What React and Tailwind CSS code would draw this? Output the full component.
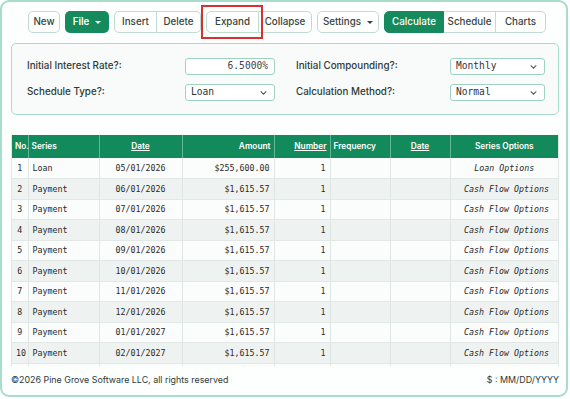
import React from "react";

const rows = [
  { no: 1, series: "Loan", date: "05/01/2026", amount: "$255,600.00", opt: "Loan Options" },
  { no: 2, series: "Payment", date: "06/01/2026", amount: "$1,615.57", opt: "Cash Flow Options" },
  { no: 3, series: "Payment", date: "07/01/2026", amount: "$1,615.57", opt: "Cash Flow Options" },
  { no: 4, series: "Payment", date: "08/01/2026", amount: "$1,615.57", opt: "Cash Flow Options" },
  { no: 5, series: "Payment", date: "09/01/2026", amount: "$1,615.57", opt: "Cash Flow Options" },
  { no: 6, series: "Payment", date: "10/01/2026", amount: "$1,615.57", opt: "Cash Flow Options" },
  { no: 7, series: "Payment", date: "11/01/2026", amount: "$1,615.57", opt: "Cash Flow Options" },
  { no: 8, series: "Payment", date: "12/01/2026", amount: "$1,615.57", opt: "Cash Flow Options" },
  { no: 9, series: "Payment", date: "01/01/2027", amount: "$1,615.57", opt: "Cash Flow Options" },
  { no: 10, series: "Payment", date: "02/01/2027", amount: "$1,615.57", opt: "Cash Flow Options" },
];

const Caret = () => (
  <span className="ml-[6px] inline-block w-0 h-0 border-l-[3px] border-r-[3px] border-t-[3px] border-l-transparent border-r-transparent border-t-current" />
);

const Chevron = () => (
  <svg width="9" height="9" viewBox="0 0 16 16" fill="none" stroke="#555" strokeWidth="1.8">
    <path d="M3 6l5 5 5-5" />
  </svg>
);

const btn =
  "h-[22px] flex items-center justify-center text-[9.8px] font-medium border border-[#bfdcd1] bg-white text-[#33453e]";

const Select = ({ value }) => (
  <div className="h-[17px] flex items-center justify-between pl-[5px] pr-[6px] border border-[#9fd3c1] rounded-[3px] bg-white text-[9.6px] text-[#333] font-['DejaVu_Sans_Mono',monospace]">
    <span>{value}</span>
    <Chevron />
  </div>
);

const App = () => {
  const th = "border-r border-[#5fb893] px-[3px] font-semibold text-white text-[8.3px] whitespace-nowrap";
  const td = "border-r border-[#dfe6e3] px-[4px] whitespace-nowrap";

  return (
    <div className="w-[570px] h-[399px] overflow-hidden bg-white font-['Inter',sans-serif]">
      <div className="relative w-[568px] h-[397px] border-2 border-[#a9dccb] rounded-[9px] bg-[#fdfefe] flex flex-col">
        {/* toolbar */}
        <div className="flex items-center gap-[5px] pl-[26px] pt-[9px]">
          <button className={`${btn} w-[32px] rounded-[5px]`}>New</button>
          <button className="w-[44px] h-[22px] flex items-center justify-center text-[9.8px] font-semibold rounded-[5px] bg-[#158a5c] text-white">
            File
            <Caret />
          </button>
          <div className="flex">
            <button className={`${btn} w-[43px] rounded-l-[5px]`}>Insert</button>
            <button className={`${btn} w-[44px] border-l-0 rounded-r-[5px]`}>Delete</button>
          </div>
          <div className="flex">
            <button className={`${btn} w-[53px] rounded-l-[5px]`}>Expand</button>
            <button className={`${btn} w-[53px] border-l-0 rounded-r-[5px]`}>Collapse</button>
          </div>
          <button className={`${btn} w-[62px] rounded-[5px]`}>
            Settings
            <Caret />
          </button>
          <div className="flex">
            <button className="w-[60px] h-[22px] flex items-center justify-center text-[9.8px] font-medium rounded-l-[5px] bg-[#158a5c] text-white border border-[#158a5c]">
              Calculate
            </button>
            <button className={`${btn} w-[52px] border-l-0`}>Schedule</button>
            <button className={`${btn} w-[50px] border-l-0 rounded-r-[5px]`}>Charts</button>
          </div>
        </div>

        {/* highlight */}
        <div className="absolute left-[199px] top-[3px] w-[62px] h-[34px] border-2 border-[#d63232]" />

        {/* settings panel */}
        <div className="mt-[10px] ml-[9px] w-[548px] h-[72px] border border-[#a9dccb] rounded-[5px] bg-[#f8fbfa] px-[15px] pt-[14px] text-[9.8px] font-medium text-[#2f3a36]">
          <div className="grid grid-cols-[158px_90px_21px_154px_95px] gap-y-[9px] items-center">
            <span>Initial Interest Rate?:</span>
            <div className="h-[17px] flex items-center justify-end pr-[6px] border border-[#9fd3c1] rounded-[3px] bg-white text-[9.6px] text-[#444] font-['DejaVu_Sans_Mono',monospace]">
              6.5000%
            </div>
            <span />
            <span>Initial Compounding?:</span>
            <Select value="Monthly" />
            <span>Schedule Type?:</span>
            <Select value="Loan" />
            <span />
            <span>Calculation Method?:</span>
            <Select value="Normal" />
          </div>
        </div>

        {/* table */}
        <div className="mt-[20px] ml-[9px] w-[548px] h-[231px] overflow-hidden border-x border-[#dfe6e3]">
          <table className="w-full border-collapse table-fixed text-[8.3px] text-[#2a2a2a] font-['DejaVu_Sans_Mono',monospace]">
            <colgroup>
              <col className="w-[16px]" />
              <col className="w-[71px]" />
              <col className="w-[83px]" />
              <col className="w-[92px]" />
              <col className="w-[56px]" />
              <col className="w-[60px]" />
              <col className="w-[60px]" />
              <col />
            </colgroup>
            <thead>
              <tr className="h-[23px] bg-[#128a5c] font-['Inter',sans-serif]">
                <th className={`${th} px-[1px] text-left`}>No.</th>
                <th className={`${th} text-left`}>Series</th>
                <th className={`${th} underline`}>Date</th>
                <th className={`${th} text-right`}>Amount</th>
                <th className={`${th} text-right underline`}>Number</th>
                <th className={`${th} text-left`}>Frequency</th>
                <th className={`${th} underline`}>Date</th>
                <th className="px-[3px] font-semibold text-white text-[8.3px]">Series Options</th>
              </tr>
            </thead>
            <tbody>
              {rows.map((r, i) => (
                <tr
                  key={r.no}
                  className={`h-[20.5px] border-b border-[#e2e8e5] ${i % 2 ? "bg-[#eef3f1]" : "bg-[#fbfcfc]"}`}
                >
                  <td className={`${td} px-[1px] text-center`}>{r.no}</td>
                  <td className={td}>{r.series}</td>
                  <td className={`${td} text-center`}>{r.date}</td>
                  <td className={`${td} text-right`}>{r.amount}</td>
                  <td className={`${td} text-right`}>1</td>
                  <td className={td}></td>
                  <td className={td}></td>
                  <td className={`px-[4px] italic whitespace-nowrap ${i === 0 ? "text-center" : "text-right pr-[9px]"}`}>
                    {r.opt}
                  </td>
                </tr>
              ))}
              {/* next row, scrolled below the fold */}
              <tr className="h-[20.5px] bg-[#fbfcfc]">
                <td className={td}></td>
                <td className={td}></td>
                <td className={td}></td>
                <td className={td}></td>
                <td className={td}></td>
                <td className={td}></td>
                <td className={td}></td>
                <td></td>
              </tr>
            </tbody>
          </table>
        </div>

        {/* footer */}
        <div className="flex justify-between items-center ml-[9px] w-[548px] mt-[7px] text-[8.9px] font-normal text-[#2f3a36]">
          <span>©2026 Pine Grove Software LLC, all rights reserved</span>
          <span>$ : MM/DD/YYYY</span>
        </div>
      </div>
    </div>
  );
};

export default App;
